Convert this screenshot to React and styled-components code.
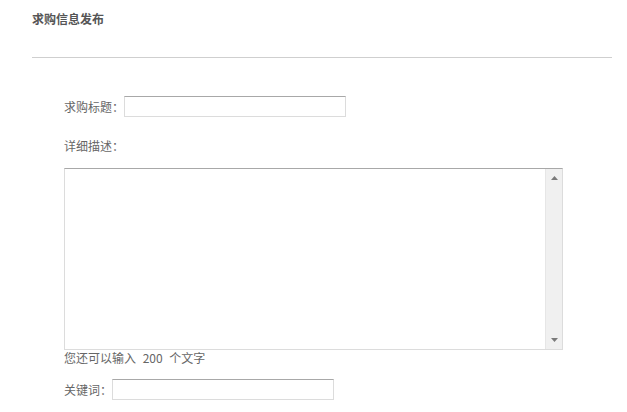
import React from 'react'
import styled, { createGlobalStyle } from 'styled-components'

const GlobalStyle = createGlobalStyle`
  body {
    margin: 0;
    background: #fff;
    font-family: "Microsoft YaHei", "Noto Sans CJK SC", "Liberation Sans", sans-serif;
    font-size: 12px;
    color: #666;
  }
`

const Page = styled.div`
  padding: 0 15px 0 32px;
`

const Header = styled.div`
  height: 58px;
  box-sizing: border-box;
  padding-top: 11px;
  border-bottom: 1px solid #cfcfcf;
`

const Title = styled.h2`
  margin: 0;
  font-size: 12px;
  line-height: 16px;
  font-weight: bold;
  color: #555;
`

const Form = styled.div`
  padding: 38px 0 0 32px;
  display: flex;
  flex-direction: column;
`

const Row = styled.div`
  display: flex;
  align-items: center;
  height: 21px;
  margin-top: ${p => p.$top || 0}px;
`

const Label = styled.span`
  line-height: 21px;
  color: #666;
`

const TextInput = styled.input`
  box-sizing: border-box;
  width: ${p => p.$width}px;
  height: 21px;
  margin: 0;
  padding: 0 4px;
  border: 1px solid #dcdcdc;
  border-top-color: #a8a8a8;
  outline: none;
  font: inherit;
`

const FieldTitle = styled.div`
  margin-top: 20px;
  line-height: 18px;
`

const AreaBox = styled.div`
  margin-top: 13px;
  width: 499px;
  height: 182px;
  box-sizing: border-box;
  display: flex;
  border: 1px solid #dcdcdc;
  border-top-color: #a8a8a8;
`

const Area = styled.textarea`
  flex: 1;
  border: none;
  outline: none;
  resize: none;
  overflow: hidden;
  padding: 3px;
  font: inherit;
`

const ScrollTrack = styled.div`
  width: 16px;
  background: #f0f0f0;
  border-left: 1px solid #e6e6e6;
  display: flex;
  flex-direction: column;
  justify-content: space-between;
  align-items: center;
  padding: 7px 0;
`

const Hint = styled.div`
  line-height: 16px;
  word-spacing: 4px;
  color: #666;
`

const Arrow = ({ down }) => (
  <svg width="7" height="4" viewBox="0 0 7 4">
    <path d={down ? 'M0 0H7L3.5 4Z' : 'M3.5 0L7 4H0Z'} fill="#7a7a7a" />
  </svg>
)

export default function App() {
  return (
    <Page>
      <GlobalStyle />
      <Header>
        <Title>求购信息发布</Title>
      </Header>
      <Form>
        <Row>
          <Label>求购标题：</Label>
          <TextInput $width={222} />
        </Row>
        <FieldTitle>详细描述：</FieldTitle>
        <AreaBox>
          <Area />
          <ScrollTrack>
            <Arrow />
            <Arrow down />
          </ScrollTrack>
        </AreaBox>
        <Hint>您还可以输入 200 个文字</Hint>
        <Row $top={13}>
          <Label>关键词：</Label>
          <TextInput $width={222} />
        </Row>
      </Form>
    </Page>
  )
}
